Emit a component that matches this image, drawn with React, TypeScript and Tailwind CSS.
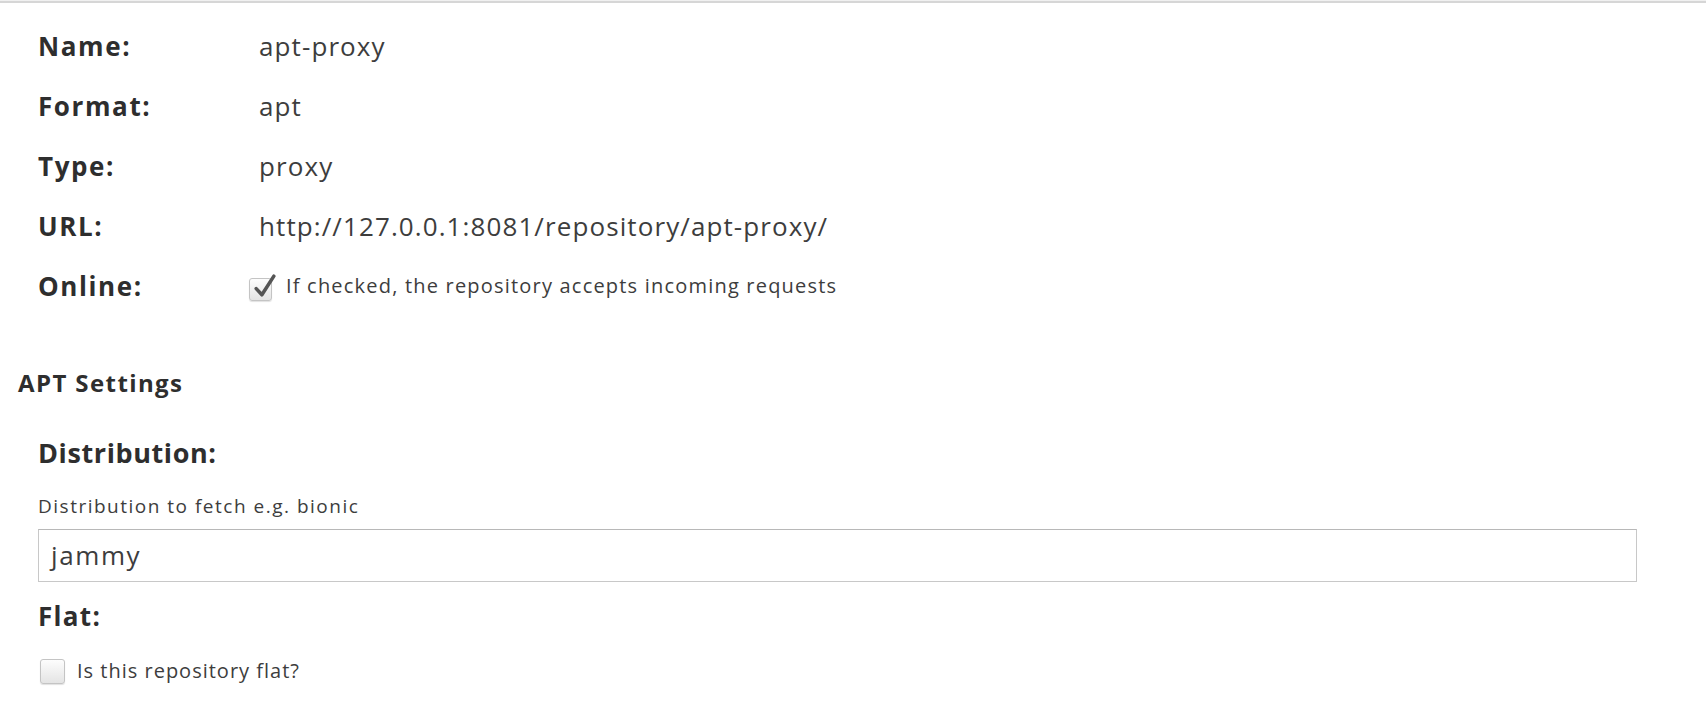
import React from "react";

function CheckBox({ checked, size }: { checked?: boolean; size: number }) {
  return (
    <span
      className="relative inline-block shrink-0 rounded-[3px] border border-[#c4c4c4] bg-gradient-to-b from-[#fdfdfd] to-[#e4e4e4] shadow-[0_1px_1px_rgba(0,0,0,0.12)]"
      style={{ width: size, height: size }}
    >
      {checked && (
        <svg
          className="absolute left-[2px] top-[-6px]"
          width={size + 2}
          height={size + 4}
          viewBox="0 0 24 26"
        >
          <path
            d="M4 15 L9.5 21 L21 3"
            fill="none"
            stroke="#555"
            strokeWidth="3.4"
            strokeLinecap="round"
            strokeLinejoin="round"
          />
        </svg>
      )}
    </span>
  );
}

const rows: { label: string; value: string }[] = [
  { label: "Name:", value: "apt-proxy" },
  { label: "Format:", value: "apt" },
  { label: "Type:", value: "proxy" },
  { label: "URL:", value: "http://127.0.0.1:8081/repository/apt-proxy/" },
];

export default function App() {
  return (
    <div
      className="min-h-[722px] w-full bg-white text-[#333]"
      style={{ fontFamily: '"Open Sans", "Liberation Sans", sans-serif' }}
    >
      <div className="h-px bg-[#f0f0f0]" />
      <div className="h-[2px] bg-[#d6d6d6]" />

      <div className="pl-[18px] pr-[69px] pt-[13px]">
        {/* Summary rows */}
        <div className="pl-[20px]">
          {rows.map((r) => (
            <div key={r.label} className="grid h-[60px] grid-cols-[221px_1fr] items-center">
              <div className="text-[26px] font-bold leading-[60px] tracking-[1.6px] text-[#2e2e2e]">
                {r.label}
              </div>
              <div className="text-[26px] leading-[60px] tracking-[1.1px] text-[#3d3d3d]">
                {r.value}
              </div>
            </div>
          ))}
          <div className="grid h-[60px] grid-cols-[221px_1fr] items-center">
            <div className="text-[26px] font-bold leading-[60px] tracking-[1.6px] text-[#2e2e2e]">
              Online:
            </div>
            <div className="-ml-[10px] flex items-center gap-[14px]">
              <span className="mt-[6px] flex">
                <CheckBox checked size={23} />
              </span>
              <span className="text-[20px] leading-[60px] tracking-[1.2px] text-[#3d3d3d]">
                If checked, the repository accepts incoming requests
              </span>
            </div>
          </div>
        </div>

        {/* APT Settings */}
        <div className="mt-[52px] text-[24px] font-bold leading-[30px] tracking-[1.4px] text-[#2e2e2e]">
          APT Settings
        </div>

        <div className="pl-[20px]">
          <div className="mt-[37px] text-[27px] font-bold leading-[36px] tracking-[0.6px] text-[#2e2e2e]">
            Distribution:
          </div>
          <div className="mt-[23px] text-[19px] leading-[24px] tracking-[1.5px] text-[#3d3d3d]">
            Distribution to fetch e.g. bionic
          </div>
          <div className="mt-[11px] flex h-[53px] items-center border border-[#c8c8c8] border-t-[#b8b8b8] bg-white px-[12px] text-[26px] tracking-[1.6px] text-[#3d3d3d]">
            jammy
          </div>

          <div className="mt-[17px] text-[26px] font-bold leading-[34px] tracking-[1.3px] text-[#2e2e2e]">
            Flat:
          </div>
          <div className="mt-[25px] flex items-center gap-[12px] pl-[2px]">
            <CheckBox size={25} />
            <span className="text-[20px] leading-[26px] tracking-[1px] text-[#3d3d3d]">
              Is this repository flat?
            </span>
          </div>
        </div>
      </div>
    </div>
  );
}
